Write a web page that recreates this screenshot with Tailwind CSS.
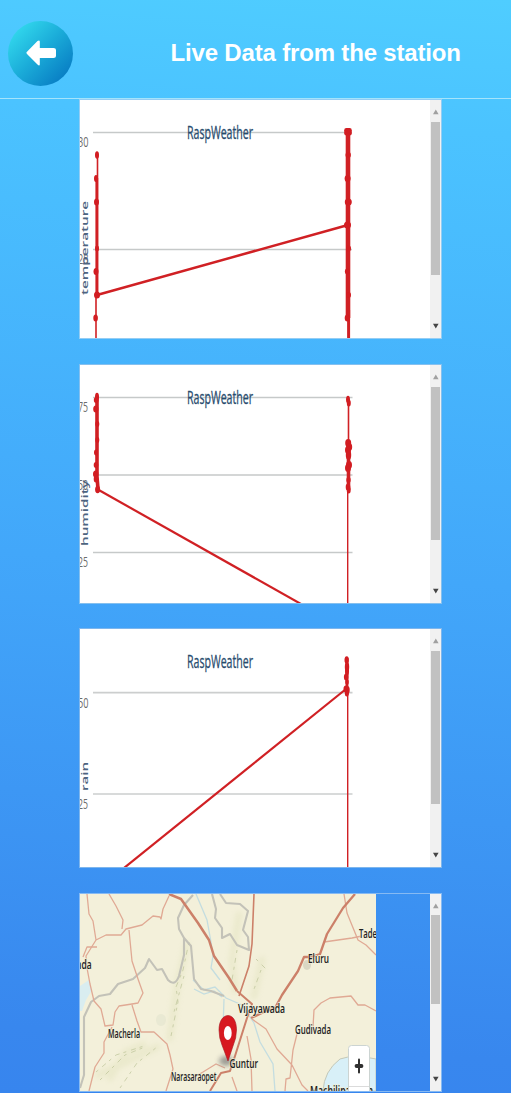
<!DOCTYPE html>
<html lang="en">
<head>
<meta charset="utf-8">
<title>Live Data</title>
<script src="https://cdn.jsdelivr.net/npm/@tailwindcss/browser@4"></script>
</head>
<body class="h-[1093px] w-[511px] overflow-hidden bg-[linear-gradient(184deg,#4fcdff_0%,#4bc3ff_12%,#42a7fa_52%,#3887ee_94%,#3785ee_100%)] font-['Liberation_Sans',sans-serif]">
<header class="flex h-[99px] items-center border-b border-[#a5e4fb] pl-2">
  <button aria-label="Back" class="mt-2 flex size-[65px] items-center justify-center rounded-full bg-[linear-gradient(135deg,#36dff0_5%,#1badd9_48%,#0575c0_95%)]">
    <svg class="h-[26px] w-[30px]" viewBox="0 0 30 26"><path d="M1 11.700L11.500 1Q13.500-.4 13.800 1.500V8H27.500Q30 8 30 10V16Q30 18 27.500 18H13.800V24.500Q13.500 26.500 11.500 24.600L1 14Q-.2 12.800 1 11.700Z" fill="#fff"/></svg>
  </button>
  <h1 class="ml-[97px] mt-[7px] whitespace-nowrap text-2xl font-bold text-white"><svg class="block h-8 w-[294px]" viewBox="170 37 294 32"><text x="170.500" y="61" textLength="290.500" fill="#fff">Live Data from the station</text></svg></h1>
</header>
<main class="ml-[79px] flex w-[363px] flex-col font-['Open_Sans',sans-serif]">
  <section class="flex h-[240px] border border-[#94cdf4] bg-white">
    <svg class="h-[238px] w-[350px]" viewBox="80 100 350 238">
      <path d="M93 132.500H352M93 249.500H352" stroke="#c6c9c9" stroke-width="1.300"/>
      <text x="78" y="147" font-size="14" textLength="10.500" lengthAdjust="spacingAndGlyphs" fill="#6c6c6c">30</text>
      <text x="78" y="264" font-size="14" textLength="10.500" lengthAdjust="spacingAndGlyphs" fill="#6c6c6c">28</text>
      <text transform="translate(87.500 295) rotate(-90)" font-size="9.500" font-weight="600" textLength="94" lengthAdjust="spacingAndGlyphs" fill="#4d6480">temperature</text>
      <g stroke="#d02024" fill="none"><path d="M97.500 155V295" stroke-width="1.600"/><path d="M96.800 178V295" stroke-width="2.800"/><path d="M96 295V338" stroke-width="1.600"/><path d="M97 295L348 225" stroke-width="2.500"/><path d="M348 130V318" stroke-width="4.600"/><path d="M348.600 310V338" stroke-width="3"/></g>
      <g fill="#d21d22"><ellipse cx="97" cy="155" rx="2" ry="3.800"/><ellipse cx="96" cy="178.500" rx="2" ry="3.500"/><ellipse cx="96.500" cy="202" rx="2.500" ry="3.500"/><ellipse cx="97" cy="248.500" rx="2" ry="3"/><ellipse cx="96" cy="271.500" rx="2.500" ry="3.500"/><ellipse cx="97" cy="295" rx="3" ry="3.500"/><ellipse cx="95.600" cy="318" rx="2.300" ry="3.500"/>
      <rect x="344.200" y="128" width="7.600" height="7.500" rx="2.200"/><ellipse cx="348.200" cy="155" rx="2.700" ry="3"/><ellipse cx="347.600" cy="178.500" rx="3" ry="3.500"/><ellipse cx="348.300" cy="202" rx="3.500" ry="3.500"/><ellipse cx="347.500" cy="225" rx="3.500" ry="3.500"/><ellipse cx="348.500" cy="248.500" rx="2.500" ry="3"/><ellipse cx="347.300" cy="271.500" rx="2.400" ry="3"/><ellipse cx="348.500" cy="295" rx="2.500" ry="3"/><ellipse cx="347.300" cy="318" rx="2.600" ry="3.500"/></g>
      <text x="187" y="139" font-size="19" textLength="66" lengthAdjust="spacingAndGlyphs" fill="#274b6d" stroke="#274b6d" stroke-width=".3">RaspWeather</text>
    </svg>
    <div class="flex w-[11px] flex-col items-center bg-[#f1f1f1]">
      <svg class="h-[22px] w-[11px]" viewBox="0 0 11 22"><path d="M3 14.300L5.800 9.500L8.600 14.300Z" fill="#a0a0a0"/></svg>
      <div class="h-[153px] w-[9px] bg-[#c1c1c1]"></div>
      <svg class="mt-auto h-[22px] w-[11px]" viewBox="0 0 11 22"><path d="M3 7.800H8.600L5.800 12.500Z" fill="#454545"/></svg>
    </div>
  </section>
  <section class="mt-[25px] flex h-[240px] border border-[#85c0ef] bg-white">
    <svg class="h-[238px] w-[350px]" viewBox="80 365 350 238">
      <path d="M93 397.500H352.500M93 475H352.500M93 552.500H352.500" stroke="#c6c9c9" stroke-width="1.400"/>
      <text x="78" y="412" font-size="14" textLength="10" lengthAdjust="spacingAndGlyphs" fill="#6c6c6c">75</text>
      <text x="78" y="490" font-size="14" textLength="10" lengthAdjust="spacingAndGlyphs" fill="#6c6c6c">50</text>
      <text x="78" y="567" font-size="14" textLength="10" lengthAdjust="spacingAndGlyphs" fill="#6c6c6c">25</text>
      <text transform="translate(87.500 546) rotate(-90)" font-size="9.500" font-weight="600" textLength="66" lengthAdjust="spacingAndGlyphs" fill="#4d6480">humidity</text>
      <g stroke="#d02024" fill="none"><path d="M97 396V477L98 489" stroke-width="3.600"/><path d="M97 489L301 604" stroke-width="2.200"/><path d="M348.500 399V445" stroke-width="1.600"/><path d="M348.500 441V490" stroke-width="3.600"/><path d="M347.700 490V603" stroke-width="1.400"/></g>
      <g fill="#d21d22"><ellipse cx="97" cy="396.500" rx="2" ry="3.800"/><ellipse cx="96.200" cy="400" rx="2.400" ry="3"/><ellipse cx="95.800" cy="409" rx="2.600" ry="3.500"/><ellipse cx="97.300" cy="424" rx="2" ry="3"/><ellipse cx="97.300" cy="440" rx="2" ry="3"/><ellipse cx="96" cy="452.500" rx="2" ry="3"/><ellipse cx="96" cy="465" rx="2.300" ry="3"/><ellipse cx="95.700" cy="474" rx="2.700" ry="3.500"/><ellipse cx="96" cy="479" rx="2.300" ry="3.500"/><ellipse cx="97.600" cy="489.500" rx="2.500" ry="3.800"/>
      <ellipse cx="348" cy="399.500" rx="2" ry="3.800"/><ellipse cx="348.800" cy="403" rx="2" ry="3.500"/><ellipse cx="348.200" cy="443" rx="3" ry="4"/><ellipse cx="349.200" cy="447" rx="3" ry="4"/><ellipse cx="348" cy="450" rx="3" ry="4"/><ellipse cx="348.500" cy="455" rx="2.700" ry="5"/><ellipse cx="349" cy="465" rx="3" ry="4"/><ellipse cx="348" cy="468" rx="3" ry="4"/><ellipse cx="348.500" cy="480" rx="2.200" ry="3"/><ellipse cx="348" cy="487" rx="2.300" ry="3.500"/><ellipse cx="348.700" cy="490" rx="2" ry="3.500"/></g>
      <text x="187" y="404" font-size="19" textLength="66" lengthAdjust="spacingAndGlyphs" fill="#274b6d" stroke="#274b6d" stroke-width=".3">RaspWeather</text>
    </svg>
    <div class="flex w-[11px] flex-col items-center bg-[#f1f1f1]">
      <svg class="h-[22px] w-[11px]" viewBox="0 0 11 22"><path d="M3 14.300L5.800 9.500L8.600 14.300Z" fill="#a0a0a0"/></svg>
      <div class="h-[153px] w-[9px] bg-[#c1c1c1]"></div>
      <svg class="mt-auto h-[22px] w-[11px]" viewBox="0 0 11 22"><path d="M3 7.800H8.600L5.800 12.500Z" fill="#454545"/></svg>
    </div>
  </section>
  <section class="mt-[24px] flex h-[240px] border border-[#7eb6ed] bg-white">
    <svg class="h-[238px] w-[350px]" viewBox="80 629 350 238">
      <path d="M93 692.700H352.500M93 794H352.500" stroke="#cccece" stroke-width="1.700"/>
      <text x="78" y="708" font-size="14" textLength="10.500" lengthAdjust="spacingAndGlyphs" fill="#6c6c6c">50</text>
      <text x="78" y="808.500" font-size="14" textLength="10" lengthAdjust="spacingAndGlyphs" fill="#6c6c6c">25</text>
      <text transform="translate(87.500 791) rotate(-90)" font-size="9.500" font-weight="600" textLength="29" lengthAdjust="spacingAndGlyphs" fill="#4d6480">rain</text>
      <g stroke="#d02024" fill="none"><path d="M124 868L346 689" stroke-width="2.200"/><path d="M347 658V695" stroke-width="2.800"/><path d="M347.700 690V867" stroke-width="1.400"/></g>
      <g fill="#d21d22"><ellipse cx="346.700" cy="660" rx="2.200" ry="3.800"/><ellipse cx="347" cy="667" rx="2.200" ry="5"/><ellipse cx="347" cy="671" rx="2" ry="5"/><ellipse cx="346.200" cy="677" rx="2.300" ry="3.500"/><ellipse cx="347" cy="682" rx="1.800" ry="3"/><ellipse cx="345.800" cy="689" rx="2.300" ry="3.500"/><ellipse cx="347.300" cy="690" rx="2.400" ry="4"/><ellipse cx="346.800" cy="693" rx="2" ry="3.500"/></g>
      <text x="187" y="668" font-size="19" textLength="66" lengthAdjust="spacingAndGlyphs" fill="#274b6d" stroke="#274b6d" stroke-width=".3">RaspWeather</text>
    </svg>
    <div class="flex w-[11px] flex-col items-center bg-[#f1f1f1]">
      <svg class="h-[22px] w-[11px]" viewBox="0 0 11 22"><path d="M3 14.300L5.800 9.500L8.600 14.300Z" fill="#a0a0a0"/></svg>
      <div class="h-[153px] w-[9px] bg-[#c1c1c1]"></div>
      <svg class="mt-auto h-[22px] w-[11px]" viewBox="0 0 11 22"><path d="M3 7.800H8.600L5.800 12.500Z" fill="#454545"/></svg>
    </div>
  </section>
  <section class="mt-[25px] flex h-[199px] justify-between border border-[#86baf3]">
    <svg class="h-[197px] w-[296px]" viewBox="80 894 296 197">
      <defs><filter id="soft" x="-50%" y="-50%" width="200%" height="200%"><feGaussianBlur stdDeviation="2.500"/></filter></defs>
      <path d="M80 894H376V1091H80Z" fill="#f3f0da"/>
      <g fill="none" stroke="#cbd09a" stroke-linecap="round" opacity=".2" filter="url(#soft)"><path d="M187 945L177 987L170 1038M239 915L232 960L235 990M262 960L254 996M110 1078L126 1052L143 1045M98 1075L120 1065L157 1047" stroke-width="7"/></g>
      <g fill="none" stroke="#b8c093" stroke-dasharray="3 5 5 4" opacity=".65"><path d="M189 942L183 970L176 987L178 1002L171 1036M184 976L174 1012M237 950L232 980M261 970L253 992M256 959L267 970M100 1080L125 1055L145 1047M120 1088L137 1063L157 1047M96 1072L116 1055L147 1045"/></g>
      <path d="M80 986L89 980L92 990L86 1000L82 1011H80Z" fill="#d9edf0"/>
      <path d="M376 1059Q354 1054 340 1059Q324 1071 323 1091H376Z" fill="#d8f0f8" stroke="#c4c8b8" stroke-width="1"/>
      <g fill="none" stroke="#c4dde0" stroke-width="1.300"><path d="M196 894L207 920L211 942L213 956L211 968L220 980"/><path d="M193 980L204 990L215 987L226 998L242 1005L254 1023L260 1042L273 1064L275 1091M194 989L204 994L214 991L222 997"/><path d="M224 999L223 1030"/></g>
      <g fill="none" stroke="#c3c2b8" stroke-width="2.100" stroke-linejoin="round"><path d="M80 1088L84 1075V1017L91 1002L99 996L110 994L118 984L133 979L145 968L149 959L157 970L162 969L168 980Q175 987 179 976L184 955L184 938L179 929L178 918L184 905L193 895"/><path d="M184 938L191 946L194 979L201 989L211 991L224 996"/><path d="M212 894L216 909L215 918L222 928L222 938L230 934L237 945L249 950L248 937L243 930L248 911L240 904L226 903L220 894"/></g>
      <g fill="none" stroke="#e0a994" stroke-width="1.300" stroke-linejoin="round"><path d="M87 894L89 914L93 921L96 940L106 935L121 935L126 929L142 925L153 916L160 917L161 919L163 909L169 896M109 894L116 906L123 920L122 929M129 930L132 961L138 979L143 993L138 1003L132 1004L119 1006L115 1012L113 1025L105 1026L101 1009L94 1001L90 984L87 968L86 956L96 940M112 1027L104 1042L104 1053L95 1067L89 1091M132 1005L137 1021L141 1032L154 1032L167 1044L170 1055L173 1069L166 1091"/><path d="M97 947H87L83 957M344 894L347 913L358 940L366 945L376 955M324 942L352 938L362 936M252 1019L266 1029L277 1049L292 1065L302 1085L308 1091M247 1036L251 1059L252 1091M313 1027L314 1010L321 1003L330 998L351 996L358 1005L365 1005L376 1011M297 1034L293 1050L290 1078L286 1079L285 1091M232 1077L237 1091"/><path d="M189 1080L203 1072L216 1064L225 1068"/></g>
      <g fill="none" stroke="#cc8069" stroke-linejoin="round"><path d="M169 894L181 899L198 923L209 940L214 956L229 978L237 991" stroke-width="2.500"/><path d="M237 991L252 1004L247 1018L235 1056L230 1071L221 1073L210 1091" stroke-width="2"/><path d="M254 894L252 944L249 966L239 996" stroke-width="1.600"/><path d="M355 894L343 908L327 934L320 954L311 957H304L298 971L292 980L282 995L275 1008L264 1012L251 1018" stroke-width="2.300"/></g>
      <ellipse cx="161" cy="1020" rx="5" ry="6" fill="#dfe1cb" opacity=".5"/><ellipse cx="307" cy="965" rx="4" ry="5" fill="#c9c7b4" opacity=".6"/>
      <ellipse cx="226" cy="1061" rx="7" ry="5" fill="#777" opacity=".7" filter="url(#soft)"/>
      <g fill="#202020" stroke="#f3f0da" stroke-opacity=".75" stroke-width="1.800" paint-order="stroke" font-family="'Open Sans',sans-serif" font-weight="600" font-size="12.500">
        <text x="71" y="969" textLength="20.500" lengthAdjust="spacingAndGlyphs">onda</text>
        <text x="108" y="1038" textLength="32" lengthAdjust="spacingAndGlyphs">Macherla</text>
        <text x="171" y="1081" textLength="45.500" lengthAdjust="spacingAndGlyphs">Narasaraopet</text>
        <text x="238" y="1012.500" textLength="47" lengthAdjust="spacingAndGlyphs">Vijayawada</text>
        <text x="229.500" y="1067.500" textLength="28.500" lengthAdjust="spacingAndGlyphs">Guntur</text>
        <text x="308" y="963" textLength="21" lengthAdjust="spacingAndGlyphs">Eluru</text>
        <text x="295" y="1034" textLength="36" lengthAdjust="spacingAndGlyphs">Gudivada</text>
        <text x="359" y="938" textLength="18" lengthAdjust="spacingAndGlyphs">Tade</text>
        <text x="310" y="1095" textLength="63" lengthAdjust="spacingAndGlyphs">Machilipatnam</text>
      </g>
      <path d="M228 1061L222 1045Q219 1038 219 1030C219 1021 223 1015.500 228 1015.500S236.500 1021 236.500 1030Q236.500 1038 233 1046Z" fill="#d71920" stroke="#a51520" stroke-width=".6"/>
      <ellipse cx="227.800" cy="1033" rx="3.900" ry="7" fill="white"/>
      <rect x="348.500" y="1045.500" width="21" height="50" rx="3" fill="#fff" stroke="#ccd4d2"/><path d="M349 1086.500H369" stroke="#ccc" stroke-width=".7"/>
      <path d="M359 1059.500V1072.500" stroke="#303030" stroke-width="2" stroke-linecap="round"/><path d="M356.500 1066H361.500" stroke="#303030" stroke-width="3.800" stroke-linecap="round"/>
    </svg>
    <div class="flex w-[11px] flex-col items-center bg-[#f1f1f1]">
      <svg class="h-[21px] w-[11px]" viewBox="0 0 11 21"><path d="M3 14.300L5.800 9.500L8.600 14.300Z" fill="#a0a0a0"/></svg>
      <div class="h-[89px] w-[9px] bg-[#c1c1c1]"></div>
      <svg class="mt-auto h-[22px] w-[11px]" viewBox="0 0 11 22"><path d="M3 7.800H8.600L5.800 12.500Z" fill="#454545"/></svg>
    </div>
  </section>
</main>
</body>
</html>
